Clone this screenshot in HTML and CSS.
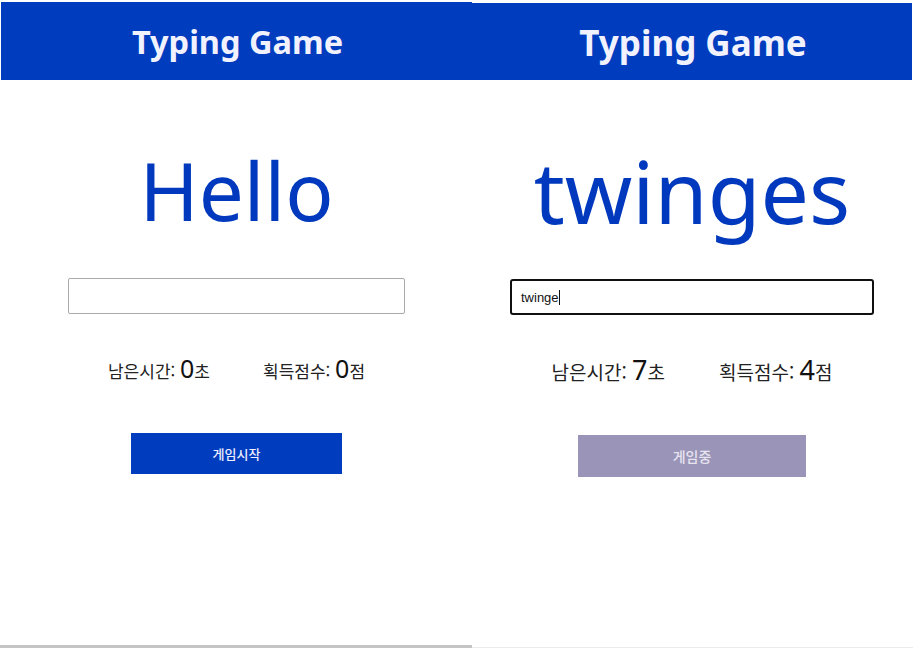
FILE: index.html
```html
<!DOCTYPE html>
<html lang="ko">
<head>
<meta charset="utf-8">
<title>Typing Game</title>
<link rel="stylesheet" href="styles.css">
</head>
<body>
<div class="screens">
  <section class="panel panel-left">
    <header class="header"><h1 class="title">Typing Game</h1></header>
    <div class="word">Hello</div>
    <input class="word-input" type="text" value="">
    <div class="stats">
      <span class="stat">남은시간: <b class="num">0</b>초</span>
      <span class="stat">획득점수: <b class="num">0</b>점</span>
    </div>
    <button class="btn btn-start">게임시작</button>
  </section>
  <section class="panel panel-right">
    <header class="header"><h1 class="title">Typing Game</h1></header>
    <div class="word">twinges</div>
    <div class="word-input focused"><span class="typed">twinge</span><span class="caret"></span></div>
    <div class="stats">
      <span class="stat">남은시간: <b class="num">7</b>초</span>
      <span class="stat">획득점수: <b class="num">4</b>점</span>
    </div>
    <button class="btn btn-playing">게임중</button>
  </section>
</div>
</body>
</html>
```
FILE: styles.css
```css
* { box-sizing: border-box; }
html, body { margin: 0; padding: 0; background: #ffffff; }
body {
  font-family: "Noto Sans", "Noto Sans CJK KR", sans-serif;
  color: #222;
  width: 913px;
  height: 651px;
  overflow: hidden;
}
.screens {
  display: flex;
  height: 651px;
}
.panel {
  display: flex;
  flex-direction: column;
  align-items: center;
  background: #fff;
}
.panel-left {
  width: 472px;
  padding: 2px 0 0 1px;
  height: 648px;
  border-bottom: 3px solid #c4c4c4;
}
.panel-right {
  width: 441px;
  padding: 3px 1px 0 0;
  height: 648px;
  border-bottom: 1px solid #ececec;
}
.header {
  align-self: stretch;
  height: 78px;
  background: #003cbe;
  display: flex;
  align-items: center;
  justify-content: center;
}
.panel-right .header { height: 77px; }
.title {
  margin: 0;
  color: #f2f2ff;
  font-family: "Noto Sans", "Noto Sans CJK KR", sans-serif;
  font-weight: 700;
  font-size: 32.5px;
  line-height: 1;
  padding-top: 2px;
  padding-left: 2px;
}
.panel-right .title { font-size: 35px; }
.word {
  color: #0039bd;
  font-family: "Noto Sans", sans-serif;
  font-weight: 400;
  font-size: 80px;
  line-height: 100px;
  height: 100px;
  margin-top: 60px;
  white-space: nowrap;
}
.panel-right .word {
  font-size: 86px;
  margin-top: 61px;
}
.word-input {
  display: block;
  width: 337px;
  height: 36px;
  margin-top: 38px;
  border: 1px solid #a9a9a9;
  border-radius: 2px;
  background: #fff;
  padding: 0 9px;
  font-family: "Liberation Sans", "Noto Sans CJK KR", sans-serif;
  font-size: 13px;
  outline: none;
}
.word-input.focused {
  width: 364px;
  margin-top: 38px;
  border: 2px solid #101010;
  border-radius: 3px;
  display: flex;
  align-items: center;
  color: #111;
}
.caret {
  display: inline-block;
  width: 1px;
  height: 15px;
  background: #111;
}
.stats {
  display: flex;
  gap: 53px;
  margin-top: 37px;
  height: 30px;
  align-items: baseline;
  font-family: "Noto Sans CJK KR", sans-serif;
  font-size: 17px;
  color: #222;
}
.panel-right .stats { gap: 54px; margin-top: 36px; font-size: 19px; }
.num {
  font-family: "Noto Sans", sans-serif;
  font-weight: 400;
  font-size: 25px;
  color: #111;
}
.panel-right .num { font-size: 27px; }
.btn {
  margin-top: 52px;
  width: 211px;
  height: 41px;
  border: none;
  border-radius: 0;
  font-family: "Noto Sans CJK KR", sans-serif;
  font-size: 13px;
  font-weight: 500;
  color: #eeeeff;
  padding: 0;
}
.btn-start { background: #003cbe; }
.btn-playing {
  width: 228px;
  height: 42px;
  margin-top: 54px;
  background: #9a95b8;
  color: #e6e3ef;
  font-size: 14px;
}
```
